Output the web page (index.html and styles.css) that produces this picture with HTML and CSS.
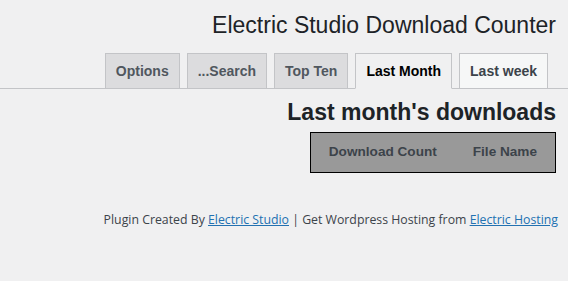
FILE: index.html
```html
<!DOCTYPE html>
<html lang="en">
<head>
<meta charset="UTF-8">
<title>Electric Studio Download Counter</title>
<link rel="stylesheet" href="styles.css">
</head>
<body>

<div class="wrap">
    <h1>Electric Studio Download Counter</h1>

    <nav class="nav-tabs">
        <a class="tab" href="#">Options</a>
        <a class="tab" href="#">...Search</a>
        <a class="tab" href="#">Top Ten</a>
        <a class="tab active" href="#">Last Month</a>
        <a class="tab light" href="#">Last week</a>
    </nav>

    <h2>Last month's downloads</h2>

    <div class="tabla-box">
        <table class="downloads">
            <thead>
                <tr>
                    <th>Download Count</th>
                    <th>File Name</th>
                </tr>
            </thead>
        </table>
    </div>
</div>

<p class="footer">Plugin Created By <a href="#">Electric Studio</a> | Get Wordpress Hosting from <a href="#">Electric Hosting</a></p>

</body>
</html>
```

FILE: styles.css
```css
body {
    font-family: "Liberation Sans", Arial, sans-serif;
    background: #f0f0f1;
    color: #1d2327;
    margin: 0;
    padding: 0;
}
.wrap {
    margin-right: 12px;
}
h1 {
    font-size: 23px;
    font-weight: normal;
    text-align: right;
    margin: 0;
    padding: 11px 0 0 0;
    line-height: 29px;
}
.nav-tabs {
    display: flex;
    justify-content: flex-end;
    gap: 7px;
    margin-top: 13px;
    margin-right: -12px;
    padding-right: 20px;
    border-bottom: 1px solid #c3c4c7;
}
.tab {
    background: #dcdcde;
    border: 1px solid #c3c4c7;
    border-bottom: none;
    color: #50575e;
    font-size: 14px;
    font-weight: bold;
    text-decoration: none;
    padding: 9px 10px 8px;
    line-height: 17px;
}
.tab.active {
    background: #f0f0f1;
    color: #000;
    border-bottom: 1px solid #f0f0f1;
    margin-bottom: -1px;
}
.tab.light {
    background: #f6f7f7;
    color: #3c434a;
}
h2 {
    font-size: 23px;
    font-weight: bold;
    text-align: right;
    margin: 10px 0 0 0;
    line-height: 26px;
}
.tabla-box {
    display: flex;
    justify-content: flex-end;
    margin-top: 7px;
}
.downloads {
    background: #999;
    border: 1px solid #000;
    border-collapse: collapse;
}
.downloads th {
    color: #3c434a;
    font-size: 13.6px;
    font-weight: bold;
    padding: 11px 18px 12px;
    line-height: 16px;
}
.footer {
    font-family: "Open Sans", sans-serif;
    font-size: 12.3px;
    color: #3c434a;
    text-align: right;
    margin: 38px 10px 0 0;
}
.footer a {
    color: #2271b1;
}
```
